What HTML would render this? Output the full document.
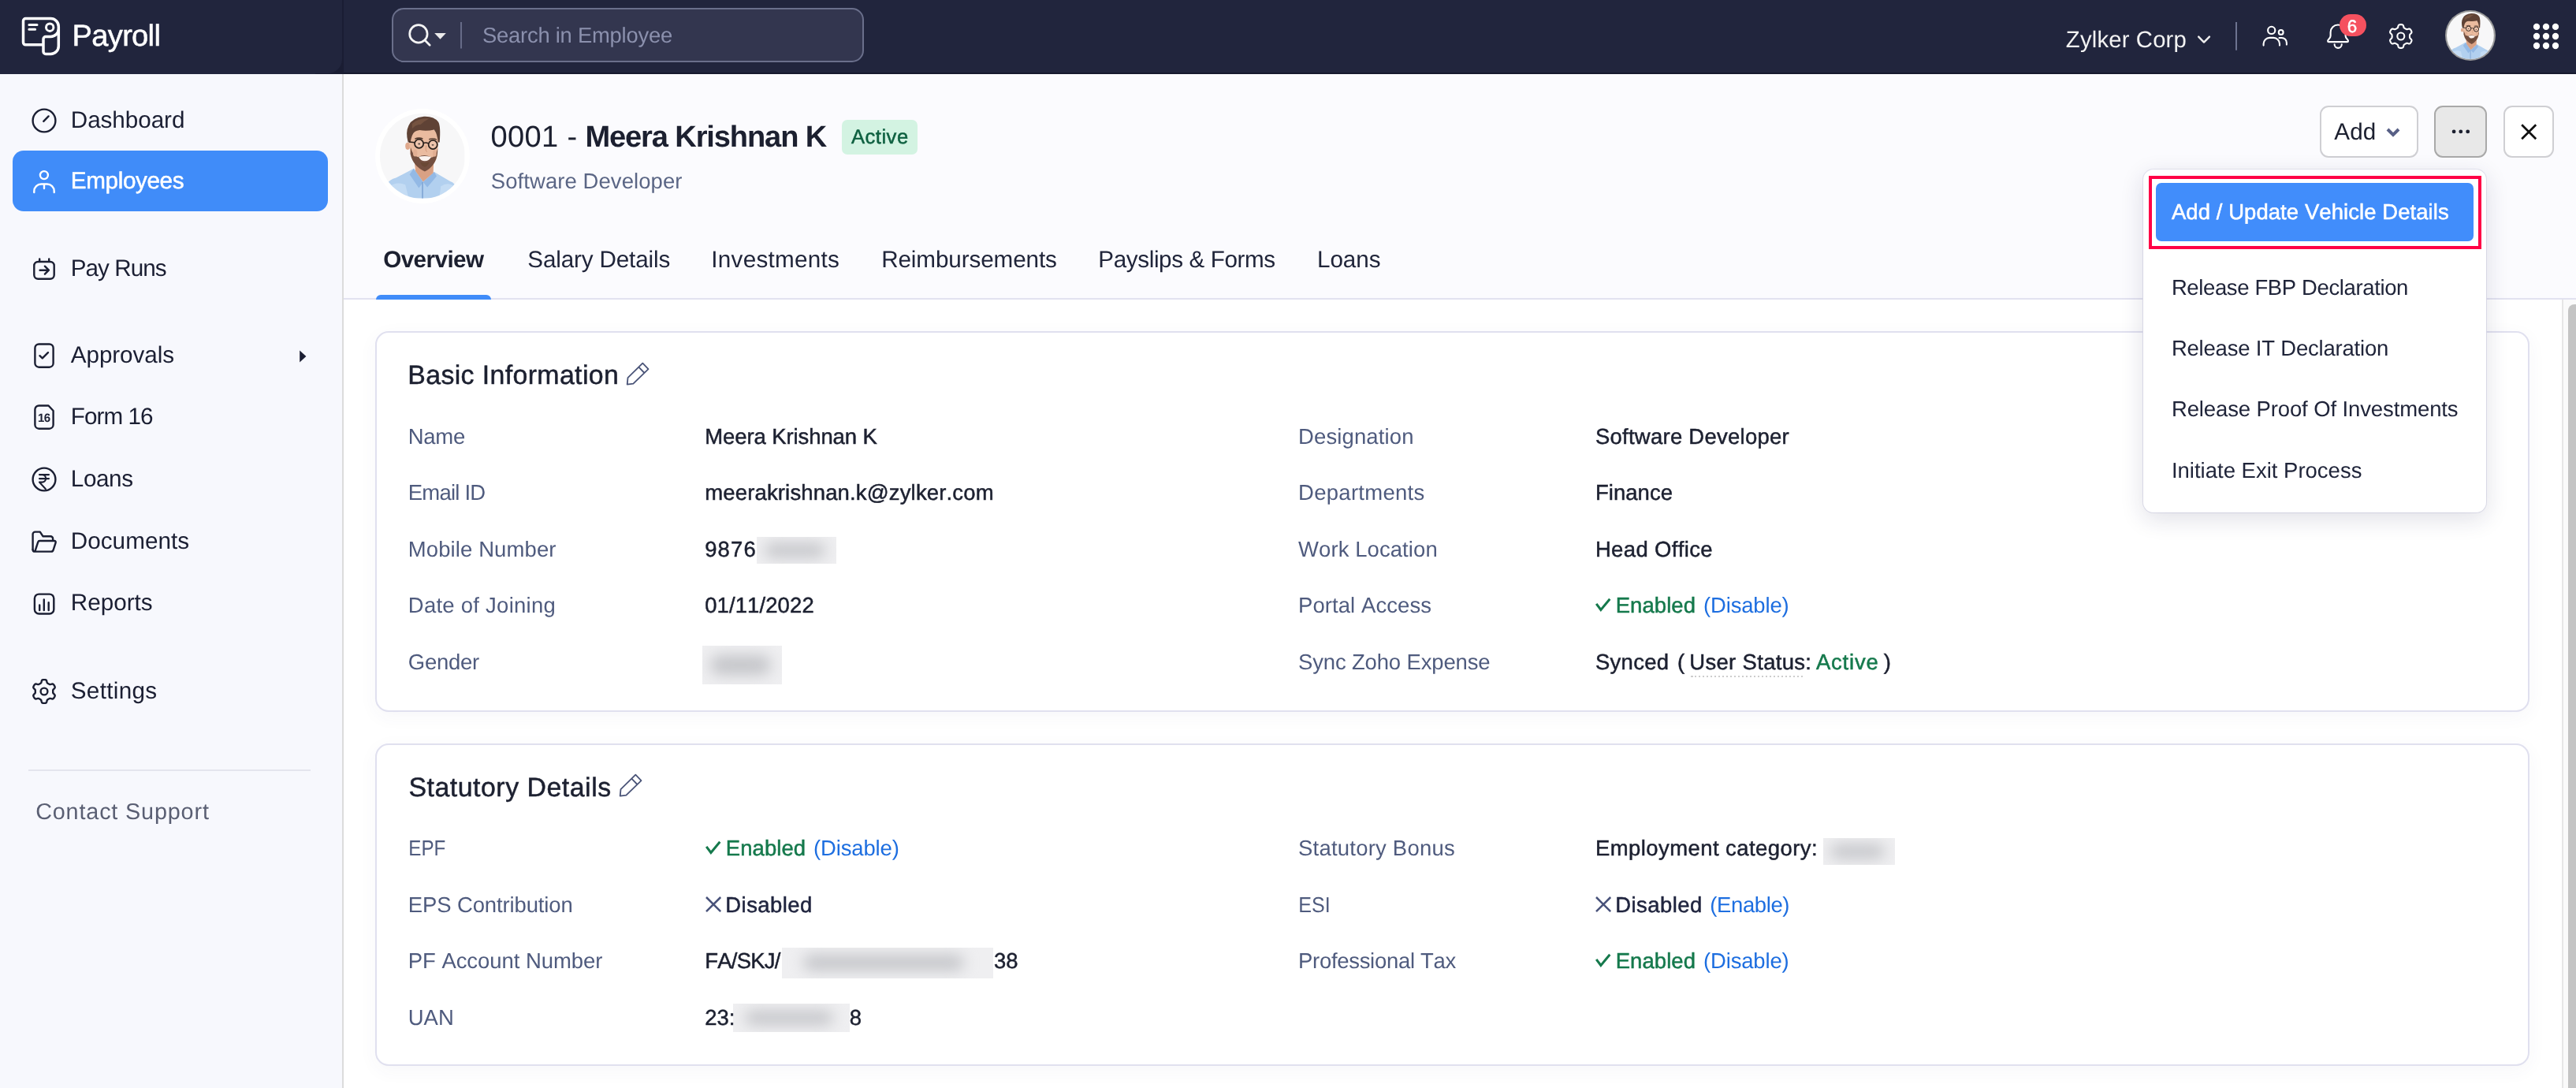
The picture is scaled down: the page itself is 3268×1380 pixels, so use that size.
<!DOCTYPE html>
<html lang="en"><head><meta charset="utf-8"><title>Payroll - Employee</title>
<style>
*{box-sizing:border-box;margin:0;padding:0}
html,body{width:3268px;height:1380px;overflow:hidden;background:#fff}
body{position:relative;font-family:"Liberation Sans",sans-serif;font-kerning:none;text-rendering:geometricPrecision;-webkit-font-smoothing:antialiased}
.t{position:absolute;white-space:nowrap;font-weight:400}
.a{position:absolute}
.ic{position:absolute;overflow:visible}
.blr{position:absolute;background:#efeff1;overflow:hidden}
.blr i{position:absolute;background:#c4c5c9;filter:blur(9px);border-radius:14px;display:block}
.card{position:absolute;left:476px;width:2733px;background:#fff;border:2px solid #e0e0ef;border-radius:17px;box-shadow:0 6px 24px rgba(60,60,120,.045)}
.btn{position:absolute;top:134px;height:66px;border:2px solid #cfcfd3;border-radius:11px;background:#fff}
</style></head><body>
<svg width="0" height="0" style="position:absolute"><filter id="avb" x="-5%" y="-5%" width="110%" height="110%"><feGaussianBlur stdDeviation="0.7"/></filter></svg>

<div class="a" style="left:0;top:0;width:3268px;height:94px;background:#21253d"></div>
<div class="a" style="left:400px;top:40px;width:36px;height:54px;background:#1a1d33"></div>
<div class="a" style="left:0;top:0;width:434px;height:93px;background:#21253d;border-radius:0 0 18px 0"></div>
<div class="a" style="left:436px;top:92px;width:2832px;height:2px;background:#171a2e"></div>
<div class="a" style="left:434px;top:0;width:2px;height:94px;background:#1a1d33"></div>
<div class="a" style="left:0;top:94px;width:434px;height:1286px;background:#f7f8fd"></div>
<div class="a" style="left:434px;top:94px;width:2px;height:1286px;background:#dcdcdc"></div>
<div class="a" style="left:436px;top:94px;width:2832px;height:285px;background:#fbfbfe"></div>
<div class="a" style="left:436px;top:378px;width:2832px;height:2px;background:#e2e2f0"></div>
<div class="a" style="left:476.6px;top:374px;width:146.6px;height:6px;background:#408cf9;border-radius:6px 6px 0 0"></div>
<div class="a" style="left:3250px;top:380px;width:18px;height:1000px;background:#fafafa;border-left:2px solid #e6e6e6"></div>
<div class="a" style="left:3258px;top:385.5px;width:14px;height:1000px;background:#c4c4c4;border-radius:8px 0 0 0"></div>
<svg class="ic" style="left:0;top:0;width:100px;height:94px" viewBox="0 0 100 94" fill="none" stroke="#fff" stroke-width="3.5" stroke-linecap="round" stroke-linejoin="round"><path d="M55,56.8 H32.5 a3,3 0 0 1 -3,-3 V26.5 a3,3 0 0 1 3,-3 H64.3 a10,10 0 0 1 10,10 V58.5 a10,10 0 0 1 -10,10 H58 a3,3 0 0 1 -3,-3 V49.5 a3,3 0 0 1 3,-3 H64.3 a10,10 0 0 0 10,-10"/><circle cx="63.2" cy="34.7" r="4.7" stroke-width="3"/><path d="M36.9,31.4 H47 M36.9,37.2 H44.6" stroke-width="3"/></svg>
<div class="a" style="left:496.5px;top:10.2px;width:599.5px;height:68.4px;border:2px solid #6a6f8b;border-radius:15px;background:#33364f"></div>
<svg class="ic" style="left:510px;top:24px;width:80px;height:44px" viewBox="510 24 80 44"><circle cx="530.9" cy="42.9" r="11.2" fill="none" stroke="#f4f4f4" stroke-width="2.7"/><path d="M539,51 L545.2,57.2" stroke="#f4f4f4" stroke-width="2.7" stroke-linecap="round"/><path d="M551.2,42 H565.8 L558.5,49.7Z" fill="#ebebeb"/><path d="M585,28 V61.5" stroke="#666b88" stroke-width="2"/></svg>
<svg class="ic" style="left:2780px;top:0;width:300px;height:94px" viewBox="2780 0 300 94" fill="none" stroke="#fff" stroke-width="2.1" stroke-linecap="round" stroke-linejoin="round"><path d="M2789.2,46.6 L2796,53.6 L2802.9,46.6" stroke="#efefef" stroke-width="2.4"/><path d="M2837,28 V63.8" stroke="#6d7390" stroke-width="2" stroke-linecap="butt"/><circle cx="2881.7" cy="38.4" r="4.6"/><circle cx="2893.7" cy="40.9" r="2.9"/><path d="M2871.6,57.6 v-2 a7.7,7.7 0 0 1 7.7,-7.7 h5 a7.7,7.7 0 0 1 7.7,7.7 v2 M2891.5,48 h3.2 a6.2,6.2 0 0 1 6.2,6.2 v2.4"/><path d="M2956.6,41 a9.5,9.5 0 0 1 19,0 v4.5 c0,3.4 3.4,4.2 3.4,6.4 c0,0.8 -0.5,1.2 -1.3,1.2 H2954.4 c-0.8,0 -1.3,-0.4 -1.3,-1.2 c0,-2.2 3.5,-3 3.5,-6.4 z"/><path d="M2961.6,56.3 a4.6,4.6 0 0 0 9.2,0"/><path d="M3057.00,46.00 L3057.00,46.39 L3056.99,46.78 L3057.00,47.18 L3057.03,47.58 L3057.16,48.00 L3057.47,48.48 L3058.05,49.05 L3058.76,49.72 L3059.28,50.38 L3059.49,50.98 L3059.48,51.53 L3059.36,52.04 L3059.17,52.52 L3058.95,52.99 L3058.70,53.45 L3058.43,53.89 L3058.14,54.32 L3057.81,54.72 L3057.43,55.08 L3056.96,55.36 L3056.33,55.48 L3055.50,55.36 L3054.57,55.08 L3053.78,54.86 L3053.21,54.83 L3052.78,54.94 L3052.42,55.11 L3052.07,55.30 L3051.74,55.50 L3051.40,55.70 L3051.06,55.89 L3050.72,56.09 L3050.38,56.29 L3050.05,56.52 L3049.74,56.84 L3049.49,57.34 L3049.28,58.13 L3049.06,59.08 L3048.75,59.86 L3048.33,60.35 L3047.85,60.61 L3047.35,60.76 L3046.84,60.84 L3046.32,60.89 L3045.80,60.90 L3045.28,60.89 L3044.76,60.84 L3044.25,60.76 L3043.75,60.61 L3043.27,60.35 L3042.85,59.86 L3042.54,59.08 L3042.32,58.13 L3042.11,57.34 L3041.86,56.84 L3041.55,56.52 L3041.22,56.29 L3040.88,56.09 L3040.54,55.89 L3040.20,55.70 L3039.86,55.50 L3039.53,55.30 L3039.18,55.11 L3038.82,54.94 L3038.39,54.83 L3037.82,54.86 L3037.03,55.08 L3036.10,55.36 L3035.27,55.48 L3034.64,55.36 L3034.17,55.08 L3033.79,54.72 L3033.46,54.32 L3033.17,53.89 L3032.90,53.45 L3032.65,52.99 L3032.43,52.52 L3032.24,52.04 L3032.12,51.53 L3032.11,50.98 L3032.32,50.38 L3032.84,49.72 L3033.55,49.05 L3034.13,48.48 L3034.44,48.00 L3034.57,47.58 L3034.60,47.18 L3034.61,46.78 L3034.60,46.39 L3034.60,46.00 L3034.60,45.61 L3034.61,45.22 L3034.60,44.82 L3034.57,44.42 L3034.44,44.00 L3034.13,43.52 L3033.55,42.95 L3032.84,42.28 L3032.32,41.62 L3032.11,41.02 L3032.12,40.47 L3032.24,39.96 L3032.43,39.48 L3032.65,39.01 L3032.90,38.55 L3033.17,38.11 L3033.46,37.68 L3033.79,37.28 L3034.17,36.92 L3034.64,36.64 L3035.27,36.52 L3036.10,36.64 L3037.03,36.92 L3037.82,37.14 L3038.39,37.17 L3038.82,37.06 L3039.18,36.89 L3039.53,36.70 L3039.86,36.50 L3040.20,36.30 L3040.54,36.11 L3040.88,35.91 L3041.22,35.71 L3041.55,35.48 L3041.86,35.16 L3042.11,34.66 L3042.32,33.87 L3042.54,32.92 L3042.85,32.14 L3043.27,31.65 L3043.75,31.39 L3044.25,31.24 L3044.76,31.16 L3045.28,31.11 L3045.80,31.10 L3046.32,31.11 L3046.84,31.16 L3047.35,31.24 L3047.85,31.39 L3048.33,31.65 L3048.75,32.14 L3049.06,32.92 L3049.28,33.87 L3049.49,34.66 L3049.74,35.16 L3050.05,35.48 L3050.38,35.71 L3050.72,35.91 L3051.06,36.11 L3051.40,36.30 L3051.74,36.50 L3052.07,36.70 L3052.42,36.89 L3052.78,37.06 L3053.21,37.17 L3053.78,37.14 L3054.57,36.92 L3055.50,36.64 L3056.33,36.52 L3056.96,36.64 L3057.43,36.92 L3057.81,37.28 L3058.14,37.68 L3058.43,38.11 L3058.70,38.55 L3058.95,39.01 L3059.17,39.48 L3059.36,39.96 L3059.48,40.47 L3059.49,41.02 L3059.28,41.62 L3058.76,42.28 L3058.05,42.95 L3057.47,43.52 L3057.16,44.00 L3057.03,44.42 L3057.00,44.82 L3056.99,45.22 L3057.00,45.61Z"/><circle cx="3045.8" cy="46" r="4.5"/></svg>
<div class="a" style="left:2967.9px;top:17.9px;width:34.4px;height:28.1px;border-radius:14px;background:#f5515f"></div>
<div style="position:absolute;left:3102px;top:12.8px;width:64.2px;height:64.2px;border-radius:50%;background:#9a9a9a;"></div>
<svg style="position:absolute;left:3104.2px;top:15.0px;width:59.800000000000004px;height:59.800000000000004px;border-radius:50%;overflow:hidden" viewBox="0 0 100 100">
<rect width="100" height="100" fill="#f7f7f8"/>
<g filter="url(#avb)">
<path d="M6,100 L9,83 Q11,78 19,76 L40,65 L51,80 L64,69 L83,80 Q89,82 90,88 L93,100Z" fill="#b2d0ef"/>
<path d="M9,100 L11,86 Q20,80 30,84 L34,100Z M70,100 L72,86 Q80,80 88,86 L91,100Z" fill="#c4dcf4"/>
<path d="M40,65 L51,81 L46,88 L35,72Z M64,69 L51,81 L56,87 L67,74Z" fill="#93b9e5"/>
<path d="M50.3,81 L50.3,100" stroke="#7ea4d4" stroke-width="1.5"/>
<path d="M41,58 L42,68 L51,80.5 L63,70 L63.5,56Z" fill="#d9a184"/>
<ellipse cx="32.8" cy="38.5" rx="2.8" ry="4.3" fill="#dfa98d"/>
<path d="M34,30 Q34,16 52,16 Q69,16 69,32 L68,48 Q66,62 53,67 Q40,62 36,48Z" fill="#eabb9f"/>
<path d="M36.3,40 L36,48 Q39,62 53,68.5 Q66,62 68,47 L68.2,41 Q66,51 61,52 Q53,47 45,51.5 Q39,50 36.3,40Z" fill="#73503f"/>
<ellipse cx="41.6" cy="46.5" rx="2.6" ry="4.2" fill="#e2af93"/>
<ellipse cx="64.6" cy="47" rx="2.2" ry="4" fill="#e2af93"/>
<path d="M45.8,51 Q53,49.4 60.6,51.2 Q58,56.2 53,56.2 Q48,56.2 45.8,51Z" fill="#fbf3ef"/>
<path d="M47.5,57.5 Q53,59 58.5,57.3 Q56,63 53,63 Q50,63 47.5,57.5Z" fill="#64432f" opacity=".55"/>
<path d="M33.2,34 Q30,22 34,14 Q38,5 52,3.5 Q64,3 69,10 Q72,15 70.5,34 L68.5,34 Q68,24 64,19 Q55,21 47,19.5 Q40,20 38,26 Q36.5,30 36,34Z" fill="#5f4335"/>
<path d="M38,12 Q46,5 58,6 Q52,9 48,13 Q42,13 38,18Z" fill="#7a5745" opacity=".8"/>
<path d="M41.3,30 Q46,27.9 50.6,29.8 M58,30.5 Q62.6,28.8 67,30.8" stroke="#4d352a" stroke-width="1.3" fill="none"/>
<ellipse cx="46.3" cy="35.9" rx="1.3" ry="0.9" fill="#3a2a24"/><ellipse cx="62.4" cy="37.1" rx="1.3" ry="0.9" fill="#3a2a24"/>
<path d="M54.6,38 Q53.4,43.8 55.6,45.4" stroke="#cf9779" stroke-width="0.9" fill="none"/>
<circle cx="46.2" cy="35.6" r="5.2" fill="rgba(255,255,255,.14)" stroke="#2b211e" stroke-width="1.6"/>
<circle cx="62.6" cy="36.8" r="5.2" fill="rgba(255,255,255,.14)" stroke="#2b211e" stroke-width="1.6"/>
<path d="M51.4,35 Q54.5,33.6 57.4,35.6 M41,34.2 L34.5,33.6" stroke="#2b211e" stroke-width="1.4" fill="none"/>
</g></svg>
<svg class="ic" style="left:3200px;top:20px;width:60px;height:50px" viewBox="3200 20 60 50" fill="#fff"><circle cx="3218" cy="33.9" r="4.15"/><circle cx="3230" cy="33.9" r="4.15"/><circle cx="3242" cy="33.9" r="4.15"/><circle cx="3218" cy="46" r="4.15"/><circle cx="3230" cy="46" r="4.15"/><circle cx="3242" cy="46" r="4.15"/><circle cx="3218" cy="58" r="4.15"/><circle cx="3230" cy="58" r="4.15"/><circle cx="3242" cy="58" r="4.15"/></svg>
<div class="a" style="left:15.8px;top:190.8px;width:400.5px;height:77px;border-radius:14px;background:#408cf9"></div>
<svg class="ic" style="left:38px;top:134.8px;width:36px;height:36px;will-change:transform" viewBox="0 0 36 36" fill="none" stroke="#1b1f33" stroke-width="2.4" stroke-linecap="round" stroke-linejoin="round"><circle cx="18" cy="18" r="14.4"/><path d="M17.3,18.9 L23.6,12.4"/></svg>
<svg class="ic" style="left:38px;top:212px;width:36px;height:36px;will-change:transform" viewBox="0 0 36 36" fill="none" stroke="#ffffff" stroke-width="2.4" stroke-linecap="round" stroke-linejoin="round"><circle cx="17.9" cy="10.1" r="5"/><path d="M5.3,32 v-1.5 a9,9 0 0 1 9,-9 h7.4 a9,9 0 0 1 9,9 v1.5 M18,22 v5"/></svg>
<svg class="ic" style="left:38px;top:322.5px;width:36px;height:36px;will-change:transform" viewBox="0 0 36 36" fill="none" stroke="#1b1f33" stroke-width="2.4" stroke-linecap="round" stroke-linejoin="round"><rect x="5.3" y="9" width="25.4" height="21.8" rx="5"/><path d="M12.2,5.4 v3.4 M24.2,5.4 v3.4 M12.6,19.7 h10.6 M18.9,14.7 l5,5 l-5,5"/></svg>
<svg class="ic" style="left:38px;top:432.8px;width:36px;height:36px;will-change:transform" viewBox="0 0 36 36" fill="none" stroke="#1b1f33" stroke-width="2.4" stroke-linecap="round" stroke-linejoin="round"><rect x="6.4" y="3.5" width="23.2" height="29.2" rx="5"/><path d="M12.4,18.2 L15.8,21.4 L23,14.2"/></svg>
<svg class="ic" style="left:38px;top:510.79999999999995px;width:36px;height:36px;will-change:transform" viewBox="0 0 36 36" fill="none" stroke="#1b1f33" stroke-width="2.4" stroke-linecap="round" stroke-linejoin="round"><path d="M11.4,3.5 H23.5 L29.6,10 V27.7 a5,5 0 0 1 -5,5 H11.4 a5,5 0 0 1 -5,-5 V8.5 a5,5 0 0 1 5,-5Z"/><text x="17.8" y="23.6" text-anchor="middle" font-family="Liberation Sans, sans-serif" font-size="15" font-weight="700" fill="#1b1f33" stroke="none" letter-spacing="-0.5">16</text></svg>
<svg class="ic" style="left:38px;top:589.7px;width:36px;height:36px;will-change:transform" viewBox="0 0 36 36" fill="none" stroke="#1b1f33" stroke-width="2.4" stroke-linecap="round" stroke-linejoin="round"><circle cx="18" cy="18" r="14.4"/><path d="M12,12.1 H24 M12,17.1 H24 M12,12.1 h3.4 a4.75,4.75 0 0 1 0,9.5 h-3.4 l7.9,8.6" stroke-width="2.1"/></svg>
<svg class="ic" style="left:38px;top:668.5px;width:36px;height:36px;will-change:transform" viewBox="0 0 36 36" fill="none" stroke="#1b1f33" stroke-width="2.4" stroke-linecap="round" stroke-linejoin="round"><path d="M3.6,28 V8.6 a3,3 0 0 1 3,-3 h6.2 l3.6,5.6 h9.7 a3,3 0 0 1 3,3 v2.6"/><path d="M6.3,30.6 L10.2,18.6 a2.3,2.3 0 0 1 2.2,-1.6 H31 a1.7,1.7 0 0 1 1.6,2.3 l-3,9.3 a2.8,2.8 0 0 1 -2.7,2 H6.3 a2.7,2.7 0 0 1 -2.7,-2.7"/></svg>
<svg class="ic" style="left:38px;top:747.7px;width:36px;height:36px;will-change:transform" viewBox="0 0 36 36" fill="none" stroke="#1b1f33" stroke-width="2.4" stroke-linecap="round" stroke-linejoin="round"><rect x="5.9" y="5.6" width="24.4" height="24.9" rx="5.5"/><path d="M12.2,19.5 v6.5 M17.8,12.4 v13.6 M23.7,16.3 v9.7"/></svg>
<svg class="ic" style="left:38px;top:858.8px;width:36px;height:36px;will-change:transform" viewBox="0 0 36 36" fill="none" stroke="#1b1f33" stroke-width="2.4" stroke-linecap="round" stroke-linejoin="round"><path d="M29.20,18.00 L29.20,18.39 L29.19,18.78 L29.20,19.18 L29.23,19.58 L29.36,20.00 L29.67,20.48 L30.25,21.05 L30.96,21.72 L31.48,22.38 L31.69,22.98 L31.68,23.53 L31.56,24.04 L31.37,24.52 L31.15,24.99 L30.90,25.45 L30.63,25.89 L30.34,26.32 L30.01,26.72 L29.63,27.08 L29.16,27.36 L28.53,27.48 L27.70,27.36 L26.77,27.08 L25.98,26.86 L25.41,26.83 L24.98,26.94 L24.62,27.11 L24.27,27.30 L23.94,27.50 L23.60,27.70 L23.26,27.89 L22.92,28.09 L22.58,28.29 L22.25,28.52 L21.94,28.84 L21.69,29.34 L21.48,30.13 L21.26,31.08 L20.95,31.86 L20.53,32.35 L20.05,32.61 L19.55,32.76 L19.04,32.84 L18.52,32.89 L18.00,32.90 L17.48,32.89 L16.96,32.84 L16.45,32.76 L15.95,32.61 L15.47,32.35 L15.05,31.86 L14.74,31.08 L14.52,30.13 L14.31,29.34 L14.06,28.84 L13.75,28.52 L13.42,28.29 L13.08,28.09 L12.74,27.89 L12.40,27.70 L12.06,27.50 L11.73,27.30 L11.38,27.11 L11.02,26.94 L10.59,26.83 L10.02,26.86 L9.23,27.08 L8.30,27.36 L7.47,27.48 L6.84,27.36 L6.37,27.08 L5.99,26.72 L5.66,26.32 L5.37,25.89 L5.10,25.45 L4.85,24.99 L4.63,24.52 L4.44,24.04 L4.32,23.53 L4.31,22.98 L4.52,22.38 L5.04,21.72 L5.75,21.05 L6.33,20.48 L6.64,20.00 L6.77,19.58 L6.80,19.18 L6.81,18.78 L6.80,18.39 L6.80,18.00 L6.80,17.61 L6.81,17.22 L6.80,16.82 L6.77,16.42 L6.64,16.00 L6.33,15.52 L5.75,14.95 L5.04,14.28 L4.52,13.62 L4.31,13.02 L4.32,12.47 L4.44,11.96 L4.63,11.48 L4.85,11.01 L5.10,10.55 L5.37,10.11 L5.66,9.68 L5.99,9.28 L6.37,8.92 L6.84,8.64 L7.47,8.52 L8.30,8.64 L9.23,8.92 L10.02,9.14 L10.59,9.17 L11.02,9.06 L11.38,8.89 L11.73,8.70 L12.06,8.50 L12.40,8.30 L12.74,8.11 L13.08,7.91 L13.42,7.71 L13.75,7.48 L14.06,7.16 L14.31,6.66 L14.52,5.87 L14.74,4.92 L15.05,4.14 L15.47,3.65 L15.95,3.39 L16.45,3.24 L16.96,3.16 L17.48,3.11 L18.00,3.10 L18.52,3.11 L19.04,3.16 L19.55,3.24 L20.05,3.39 L20.53,3.65 L20.95,4.14 L21.26,4.92 L21.48,5.87 L21.69,6.66 L21.94,7.16 L22.25,7.48 L22.58,7.71 L22.92,7.91 L23.26,8.11 L23.60,8.30 L23.94,8.50 L24.27,8.70 L24.62,8.89 L24.98,9.06 L25.41,9.17 L25.98,9.14 L26.77,8.92 L27.70,8.64 L28.53,8.52 L29.16,8.64 L29.63,8.92 L30.01,9.28 L30.34,9.68 L30.63,10.11 L30.90,10.55 L31.15,11.01 L31.37,11.48 L31.56,11.96 L31.68,12.47 L31.69,13.02 L31.48,13.62 L30.96,14.28 L30.25,14.95 L29.67,15.52 L29.36,16.00 L29.23,16.42 L29.20,16.82 L29.19,17.22 L29.20,17.61Z"/><circle cx="18" cy="18" r="4.4"/></svg>
<svg class="ic" style="left:376px;top:440px;width:16px;height:24px" viewBox="376 440 16 24"><path d="M380.2,444.4 L388.4,452 L380.2,459.6Z" fill="#1b1f33"/></svg>
<div class="a" style="left:36px;top:976px;width:357.7px;height:2px;background:#e4e5ee"></div>
<div style="position:absolute;left:476px;top:138px;width:120px;height:120px;border-radius:50%;background:#ffffff;"></div>
<svg style="position:absolute;left:482.3px;top:144.3px;width:107.4px;height:107.4px;border-radius:50%;overflow:hidden" viewBox="0 0 100 100">
<rect width="100" height="100" fill="#f7f7f8"/>
<g filter="url(#avb)">
<path d="M6,100 L9,83 Q11,78 19,76 L40,65 L51,80 L64,69 L83,80 Q89,82 90,88 L93,100Z" fill="#b2d0ef"/>
<path d="M9,100 L11,86 Q20,80 30,84 L34,100Z M70,100 L72,86 Q80,80 88,86 L91,100Z" fill="#c4dcf4"/>
<path d="M40,65 L51,81 L46,88 L35,72Z M64,69 L51,81 L56,87 L67,74Z" fill="#93b9e5"/>
<path d="M50.3,81 L50.3,100" stroke="#7ea4d4" stroke-width="1.5"/>
<path d="M41,58 L42,68 L51,80.5 L63,70 L63.5,56Z" fill="#d9a184"/>
<ellipse cx="32.8" cy="38.5" rx="2.8" ry="4.3" fill="#dfa98d"/>
<path d="M34,30 Q34,16 52,16 Q69,16 69,32 L68,48 Q66,62 53,67 Q40,62 36,48Z" fill="#eabb9f"/>
<path d="M36.3,40 L36,48 Q39,62 53,68.5 Q66,62 68,47 L68.2,41 Q66,51 61,52 Q53,47 45,51.5 Q39,50 36.3,40Z" fill="#73503f"/>
<ellipse cx="41.6" cy="46.5" rx="2.6" ry="4.2" fill="#e2af93"/>
<ellipse cx="64.6" cy="47" rx="2.2" ry="4" fill="#e2af93"/>
<path d="M45.8,51 Q53,49.4 60.6,51.2 Q58,56.2 53,56.2 Q48,56.2 45.8,51Z" fill="#fbf3ef"/>
<path d="M47.5,57.5 Q53,59 58.5,57.3 Q56,63 53,63 Q50,63 47.5,57.5Z" fill="#64432f" opacity=".55"/>
<path d="M33.2,34 Q30,22 34,14 Q38,5 52,3.5 Q64,3 69,10 Q72,15 70.5,34 L68.5,34 Q68,24 64,19 Q55,21 47,19.5 Q40,20 38,26 Q36.5,30 36,34Z" fill="#5f4335"/>
<path d="M38,12 Q46,5 58,6 Q52,9 48,13 Q42,13 38,18Z" fill="#7a5745" opacity=".8"/>
<path d="M41.3,30 Q46,27.9 50.6,29.8 M58,30.5 Q62.6,28.8 67,30.8" stroke="#4d352a" stroke-width="1.3" fill="none"/>
<ellipse cx="46.3" cy="35.9" rx="1.3" ry="0.9" fill="#3a2a24"/><ellipse cx="62.4" cy="37.1" rx="1.3" ry="0.9" fill="#3a2a24"/>
<path d="M54.6,38 Q53.4,43.8 55.6,45.4" stroke="#cf9779" stroke-width="0.9" fill="none"/>
<circle cx="46.2" cy="35.6" r="5.2" fill="rgba(255,255,255,.14)" stroke="#2b211e" stroke-width="1.6"/>
<circle cx="62.6" cy="36.8" r="5.2" fill="rgba(255,255,255,.14)" stroke="#2b211e" stroke-width="1.6"/>
<path d="M51.4,35 Q54.5,33.6 57.4,35.6 M41,34.2 L34.5,33.6" stroke="#2b211e" stroke-width="1.4" fill="none"/>
</g></svg>
<div class="a" style="left:1068px;top:152.2px;width:96.2px;height:43.4px;border-radius:7px;background:#d3f3e2"></div>
<div class="btn" style="left:2943px;width:124.8px"></div>
<svg class="ic" style="left:3024px;top:158px;width:24px;height:20px" viewBox="3024 158 24 20"><path d="M3029,164 L3036,171 L3043,164" fill="none" stroke="#586086" stroke-width="4"/></svg>
<div class="btn" style="left:3088.3px;width:67px;background:#e8e8e8;border-color:#a9a9a9"></div>
<svg class="ic" style="left:3105px;top:160px;width:34px;height:14px" viewBox="3105 160 34 14" fill="#1c2030"><circle cx="3113.1" cy="166.9" r="2.4"/><circle cx="3121.8" cy="166.9" r="2.4"/><circle cx="3130.7" cy="166.9" r="2.4"/></svg>
<div class="btn" style="left:3176px;width:64px"></div>
<svg class="ic" style="left:3194px;top:153px;width:28px;height:28px" viewBox="3194 153 28 28"><path d="M3199.2,158.2 L3217.2,176.2 M3217.2,158.2 L3199.2,176.2" stroke="#101010" stroke-width="2.7" fill="none"/></svg>
<div class="card" style="top:420px;height:483px"></div>
<div class="card" style="top:943px;height:409px"></div>
<svg class="ic" style="left:793px;top:457.5px;width:34px;height:34px" viewBox="0 0 34 34"><path d="M22.3,2.7 L29.5,10.1 L10.4,28.6 L2.7,29.7 L3.5,21.2Z M17.1,7.4 L24,14.5" fill="none" stroke="#4a5478" stroke-width="1.8" stroke-linejoin="round"/></svg>
<svg class="ic" style="left:784.3px;top:980.2px;width:34px;height:34px" viewBox="0 0 34 34"><path d="M22.3,2.7 L29.5,10.1 L10.4,28.6 L2.7,29.7 L3.5,21.2Z M17.1,7.4 L24,14.5" fill="none" stroke="#4a5478" stroke-width="1.8" stroke-linejoin="round"/></svg>
<div class="blr" style="left:960.2px;top:681.3px;width:100.8px;height:34.2px"><i style="left:10.1px;right:14.1px;top:8.2px;bottom:8.2px"></i></div>
<div class="blr" style="left:891.2px;top:819.2px;width:101.0px;height:48.4px"><i style="left:10.1px;right:14.1px;top:11.6px;bottom:11.6px"></i></div>
<div class="blr" style="left:992px;top:1202px;width:268.0px;height:38.5px"><i style="left:26.8px;right:37.5px;top:9.2px;bottom:9.2px"></i></div>
<div class="blr" style="left:930.2px;top:1273px;width:147.8px;height:35.6px"><i style="left:14.8px;right:20.7px;top:8.5px;bottom:8.5px"></i></div>
<div class="blr" style="left:2312.5px;top:1062.6px;width:91.2px;height:34.3px"><i style="left:9.1px;right:12.8px;top:8.2px;bottom:8.2px"></i></div>
<svg class="ic" style="left:2021.1px;top:754.8px;width:28px;height:28px" viewBox="0 0 28 28"><path d="M4.2,10.8 L9.9,18.5 L21.3,4.8" fill="none" stroke="#15794c" stroke-width="3" stroke-linejoin="miter"/></svg>
<svg class="ic" style="left:892.2px;top:1062.8px;width:28px;height:28px" viewBox="0 0 28 28"><path d="M4.2,10.8 L9.9,18.5 L21.3,4.8" fill="none" stroke="#15794c" stroke-width="3" stroke-linejoin="miter"/></svg>
<svg class="ic" style="left:2021.1px;top:1206.4px;width:28px;height:28px" viewBox="0 0 28 28"><path d="M4.2,10.8 L9.9,18.5 L21.3,4.8" fill="none" stroke="#15794c" stroke-width="3" stroke-linejoin="miter"/></svg>
<svg class="ic" style="left:892.4px;top:1134.8px;width:28px;height:28px" viewBox="0 0 28 28"><path d="M4,3 L22.2,21.2 M22.2,3 L4,21.2" fill="none" stroke="#48527a" stroke-width="2.5"/></svg>
<svg class="ic" style="left:2021.3px;top:1134.8px;width:28px;height:28px" viewBox="0 0 28 28"><path d="M4,3 L22.2,21.2 M22.2,3 L4,21.2" fill="none" stroke="#48527a" stroke-width="2.5"/></svg>
<div class="a" style="left:2144.5px;top:856.6px;width:144px;height:2.6px;background:repeating-linear-gradient(90deg,#cdcdcd 0 2.5px,transparent 2.5px 5px)"></div>
<div class="a" style="left:2718.8px;top:215.4px;width:435.4px;height:434.8px;border-radius:13px;background:#fff;box-shadow:0 8px 30px rgba(30,30,80,.14),0 0 0 1px rgba(225,225,238,.8)"></div>
<div class="a" style="left:2726px;top:223px;width:422px;height:93px;border:4px solid #ff0046"></div>
<div class="a" style="left:2735px;top:232px;width:403px;height:74px;border-radius:7px;background:#418dfb"></div>
<div class="a" style="left:0;top:0;width:3268px;height:1380px;will-change:transform">
<div class="t" style="left:91.58px;top:20.75px;font-size:38.08px;line-height:50px;color:#ffffff;letter-spacing:-0.688px;-webkit-text-stroke:0.5px #ffffff;">Payroll</div>
<div class="t" style="left:612.06px;top:26.91px;font-size:27.4px;line-height:36px;color:#8b90ad;letter-spacing:-0.238px;">Search in Employee</div>
<div class="t" style="left:2620.87px;top:31.00px;font-size:29.3px;line-height:39px;color:#f2f2f2;letter-spacing:0.155px;">Zylker Corp</div>
<div class="t" style="left:2977.86px;top:18.91px;font-size:22.4px;line-height:30px;color:#ffffff;-webkit-text-stroke:0.5px #ffffff;">6</div>
<div class="t" style="left:89.80px;top:132.71px;font-size:29.65px;line-height:39px;color:#1b1f33;letter-spacing:-0.055px;">Dashboard</div>
<div class="t" style="left:89.80px;top:210.00px;font-size:29.65px;line-height:39px;color:#ffffff;letter-spacing:-0.363px;-webkit-text-stroke:0.5px #ffffff;">Employees</div>
<div class="t" style="left:89.80px;top:321.00px;font-size:29.65px;line-height:39px;color:#1b1f33;letter-spacing:-0.968px;">Pay Runs</div>
<div class="t" style="left:89.80px;top:430.71px;font-size:29.65px;line-height:39px;color:#1b1f33;letter-spacing:-0.072px;">Approvals</div>
<div class="t" style="left:89.80px;top:508.50px;font-size:29.65px;line-height:39px;color:#1b1f33;letter-spacing:-0.931px;">Form 16</div>
<div class="t" style="left:89.80px;top:587.61px;font-size:29.65px;line-height:39px;color:#1b1f33;letter-spacing:-0.378px;">Loans</div>
<div class="t" style="left:89.80px;top:666.80px;font-size:29.65px;line-height:39px;color:#1b1f33;letter-spacing:0.039px;">Documents</div>
<div class="t" style="left:89.80px;top:745.30px;font-size:29.65px;line-height:39px;color:#1b1f33;letter-spacing:0.009px;">Reports</div>
<div class="t" style="left:89.80px;top:856.71px;font-size:29.65px;line-height:39px;color:#1b1f33;letter-spacing:0.305px;">Settings</div>
<div class="t" style="left:45.14px;top:1011.41px;font-size:28.78px;line-height:38px;color:#5a5f73;letter-spacing:0.849px;">Contact Support</div>
<div class="t" style="left:622.51px;top:149.00px;font-size:38.08px;line-height:50px;color:#1c2030;letter-spacing:0.361px;">0001 -</div>
<div class="t" style="left:742.45px;top:149.00px;font-size:38.08px;line-height:50px;color:#1c2030;letter-spacing:-1.131px;font-weight:700;">Meera Krishnan K</div>
<div class="t" style="left:1079.95px;top:156.91px;font-size:25.58px;line-height:34px;color:#0e6040;letter-spacing:0.506px;-webkit-text-stroke:0.5px #0e6040;">Active</div>
<div class="t" style="left:622.75px;top:211.80px;font-size:27.47px;line-height:36px;color:#5b6685;letter-spacing:0.086px;">Software Developer</div>
<div class="t" style="left:486.18px;top:310.00px;font-size:29.65px;line-height:39px;color:#1c2030;letter-spacing:-0.558px;font-weight:700;">Overview</div>
<div class="t" style="left:669.25px;top:310.00px;font-size:29.65px;line-height:39px;color:#20253a;letter-spacing:-0.145px;">Salary Details</div>
<div class="t" style="left:902.36px;top:310.00px;font-size:29.65px;line-height:39px;color:#20253a;letter-spacing:0.266px;">Investments</div>
<div class="t" style="left:1118.17px;top:310.00px;font-size:29.65px;line-height:39px;color:#20253a;letter-spacing:-0.1px;">Reimbursements</div>
<div class="t" style="left:1393.37px;top:310.00px;font-size:29.65px;line-height:39px;color:#20253a;letter-spacing:-0.384px;">Payslips &amp; Forms</div>
<div class="t" style="left:1670.97px;top:310.00px;font-size:29.65px;line-height:39px;color:#20253a;letter-spacing:-0.07px;">Loans</div>
<div class="t" style="left:2961.24px;top:147.80px;font-size:29.65px;line-height:39px;color:#1c2030;letter-spacing:0.156px;">Add</div>
<div class="t" style="left:2754.90px;top:251.30px;font-size:27.47px;line-height:36px;color:#ffffff;letter-spacing:0.078px;-webkit-text-stroke:0.5px #ffffff;">Add / Update Vehicle Details</div>
<div class="t" style="left:2754.90px;top:346.71px;font-size:27.47px;line-height:36px;color:#20253a;letter-spacing:-0.361px;">Release FBP Declaration</div>
<div class="t" style="left:2754.90px;top:424.00px;font-size:27.47px;line-height:36px;color:#20253a;letter-spacing:-0.192px;">Release IT Declaration</div>
<div class="t" style="left:2754.90px;top:501.30px;font-size:27.47px;line-height:36px;color:#20253a;letter-spacing:-0.101px;">Release Proof Of Investments</div>
<div class="t" style="left:2754.90px;top:578.61px;font-size:27.47px;line-height:36px;color:#20253a;letter-spacing:0.014px;">Initiate Exit Process</div>
<div class="t" style="left:517.22px;top:454.11px;font-size:33.87px;line-height:45px;color:#1c2030;letter-spacing:0.376px;-webkit-text-stroke:0.5px #1c2030;">Basic Information</div>
<div class="t" style="left:517.80px;top:535.91px;font-size:27.47px;line-height:36px;color:#4f5b7e;letter-spacing:-0.285px;">Name</div>
<div class="t" style="left:517.80px;top:607.21px;font-size:27.47px;line-height:36px;color:#4f5b7e;letter-spacing:-0.782px;">Email ID</div>
<div class="t" style="left:517.80px;top:678.61px;font-size:27.47px;line-height:36px;color:#4f5b7e;letter-spacing:0.117px;">Mobile Number</div>
<div class="t" style="left:517.80px;top:749.80px;font-size:27.47px;line-height:36px;color:#4f5b7e;letter-spacing:0.266px;">Date of Joining</div>
<div class="t" style="left:517.80px;top:821.50px;font-size:27.47px;line-height:36px;color:#4f5b7e;letter-spacing:-0.254px;">Gender</div>
<div class="t" style="left:894.20px;top:535.91px;font-size:27.47px;line-height:36px;color:#1c2030;letter-spacing:-0.077px;-webkit-text-stroke:0.5px #1c2030;">Meera Krishnan K</div>
<div class="t" style="left:894.20px;top:607.21px;font-size:27.47px;line-height:36px;color:#1c2030;letter-spacing:0.168px;-webkit-text-stroke:0.5px #1c2030;">meerakrishnan.k@zylker.com</div>
<div class="t" style="left:894.20px;top:678.61px;font-size:27.47px;line-height:36px;color:#1c2030;letter-spacing:1.132px;-webkit-text-stroke:0.5px #1c2030;">9876</div>
<div class="t" style="left:894.20px;top:749.80px;font-size:27.47px;line-height:36px;color:#1c2030;letter-spacing:0.111px;-webkit-text-stroke:0.5px #1c2030;">01/11/2022</div>
<div class="t" style="left:1647.00px;top:535.91px;font-size:27.47px;line-height:36px;color:#4f5b7e;letter-spacing:0.141px;">Designation</div>
<div class="t" style="left:1647.00px;top:607.21px;font-size:27.47px;line-height:36px;color:#4f5b7e;letter-spacing:0.304px;">Departments</div>
<div class="t" style="left:1647.00px;top:678.61px;font-size:27.47px;line-height:36px;color:#4f5b7e;letter-spacing:0.092px;">Work Location</div>
<div class="t" style="left:1647.00px;top:749.80px;font-size:27.47px;line-height:36px;color:#4f5b7e;letter-spacing:0.088px;">Portal Access</div>
<div class="t" style="left:1647.00px;top:821.50px;font-size:27.47px;line-height:36px;color:#4f5b7e;letter-spacing:-0.145px;">Sync Zoho Expense</div>
<div class="t" style="left:2023.90px;top:535.91px;font-size:27.47px;line-height:36px;color:#1c2030;letter-spacing:0.271px;-webkit-text-stroke:0.5px #1c2030;">Software Developer</div>
<div class="t" style="left:2023.90px;top:607.21px;font-size:27.47px;line-height:36px;color:#1c2030;letter-spacing:0.065px;-webkit-text-stroke:0.5px #1c2030;">Finance</div>
<div class="t" style="left:2023.90px;top:678.61px;font-size:27.47px;line-height:36px;color:#1c2030;letter-spacing:0.367px;-webkit-text-stroke:0.5px #1c2030;">Head Office</div>
<div class="t" style="left:2049.65px;top:749.80px;font-size:27.47px;line-height:36px;color:#15794c;letter-spacing:0.085px;-webkit-text-stroke:0.5px #15794c;">Enabled</div>
<div class="t" style="left:2161.00px;top:749.80px;font-size:27.47px;line-height:36px;color:#1d6ee0;letter-spacing:-0.15px;">(Disable)</div>
<div class="t" style="left:2023.90px;top:821.50px;font-size:27.47px;line-height:36px;color:#1c2030;letter-spacing:0.309px;-webkit-text-stroke:0.5px #1c2030;">Synced</div>
<div class="t" style="left:2128.00px;top:821.50px;font-size:27.47px;line-height:36px;color:#1c2030;-webkit-text-stroke:0.5px #1c2030;">(</div>
<div class="t" style="left:2143.28px;top:821.50px;font-size:27.47px;line-height:36px;color:#1c2030;letter-spacing:0.326px;-webkit-text-stroke:0.5px #1c2030;">User Status:</div>
<div class="t" style="left:2303.95px;top:821.50px;font-size:27.47px;line-height:36px;color:#15794c;letter-spacing:0.794px;-webkit-text-stroke:0.5px #15794c;">Active</div>
<div class="t" style="left:2389.84px;top:821.50px;font-size:27.47px;line-height:36px;color:#1c2030;-webkit-text-stroke:0.5px #1c2030;">)</div>
<div class="t" style="left:518.46px;top:977.00px;font-size:33.87px;line-height:45px;color:#1c2030;letter-spacing:0.517px;-webkit-text-stroke:0.5px #1c2030;">Statutory Details</div>
<div class="t" style="left:517.80px;top:1057.80px;font-size:27.47px;line-height:36px;color:#4f5b7e;transform:scaleX(0.8817);transform-origin:2.25px 50%;">EPF</div>
<div class="t" style="left:517.80px;top:1129.80px;font-size:27.47px;line-height:36px;color:#4f5b7e;letter-spacing:-0.116px;">EPS Contribution</div>
<div class="t" style="left:517.80px;top:1201.41px;font-size:27.47px;line-height:36px;color:#4f5b7e;letter-spacing:-0.048px;">PF Account Number</div>
<div class="t" style="left:517.80px;top:1273.00px;font-size:27.47px;line-height:36px;color:#4f5b7e;letter-spacing:-0.029px;">UAN</div>
<div class="t" style="left:920.75px;top:1057.80px;font-size:27.47px;line-height:36px;color:#15794c;letter-spacing:0.085px;-webkit-text-stroke:0.5px #15794c;">Enabled</div>
<div class="t" style="left:1032.10px;top:1057.80px;font-size:27.47px;line-height:36px;color:#1d6ee0;letter-spacing:-0.15px;">(Disable)</div>
<div class="t" style="left:920.35px;top:1129.80px;font-size:27.47px;line-height:36px;color:#20253f;letter-spacing:0.434px;-webkit-text-stroke:0.5px #20253f;">Disabled</div>
<div class="t" style="left:894.20px;top:1201.41px;font-size:27.47px;line-height:36px;color:#1c2030;letter-spacing:-0.741px;-webkit-text-stroke:0.5px #1c2030;">FA/SKJ/</div>
<div class="t" style="left:1260.95px;top:1201.41px;font-size:27.47px;line-height:36px;color:#1c2030;-webkit-text-stroke:0.5px #1c2030;">38</div>
<div class="t" style="left:894.20px;top:1273.00px;font-size:27.47px;line-height:36px;color:#1c2030;-webkit-text-stroke:0.5px #1c2030;">23:</div>
<div class="t" style="left:1077.81px;top:1273.00px;font-size:27.47px;line-height:36px;color:#1c2030;-webkit-text-stroke:0.5px #1c2030;">8</div>
<div class="t" style="left:1647.00px;top:1057.80px;font-size:27.47px;line-height:36px;color:#4f5b7e;letter-spacing:0.231px;">Statutory Bonus</div>
<div class="t" style="left:1647.00px;top:1129.80px;font-size:27.47px;line-height:36px;color:#4f5b7e;transform:scaleX(0.9128);transform-origin:2.25px 50%;">ESI</div>
<div class="t" style="left:1647.00px;top:1201.41px;font-size:27.47px;line-height:36px;color:#4f5b7e;letter-spacing:-0.286px;">Professional Tax</div>
<div class="t" style="left:2023.90px;top:1057.80px;font-size:27.47px;line-height:36px;color:#1c2030;letter-spacing:0.448px;-webkit-text-stroke:0.5px #1c2030;">Employment category:</div>
<div class="t" style="left:2049.25px;top:1129.80px;font-size:27.47px;line-height:36px;color:#20253f;letter-spacing:0.434px;-webkit-text-stroke:0.5px #20253f;">Disabled</div>
<div class="t" style="left:2169.30px;top:1129.80px;font-size:27.47px;line-height:36px;color:#1d6ee0;letter-spacing:-0.375px;">(Enable)</div>
<div class="t" style="left:2049.65px;top:1201.41px;font-size:27.47px;line-height:36px;color:#15794c;letter-spacing:0.085px;-webkit-text-stroke:0.5px #15794c;">Enabled</div>
<div class="t" style="left:2161.00px;top:1201.41px;font-size:27.47px;line-height:36px;color:#1d6ee0;letter-spacing:-0.15px;">(Disable)</div>
</div>
</body></html>
